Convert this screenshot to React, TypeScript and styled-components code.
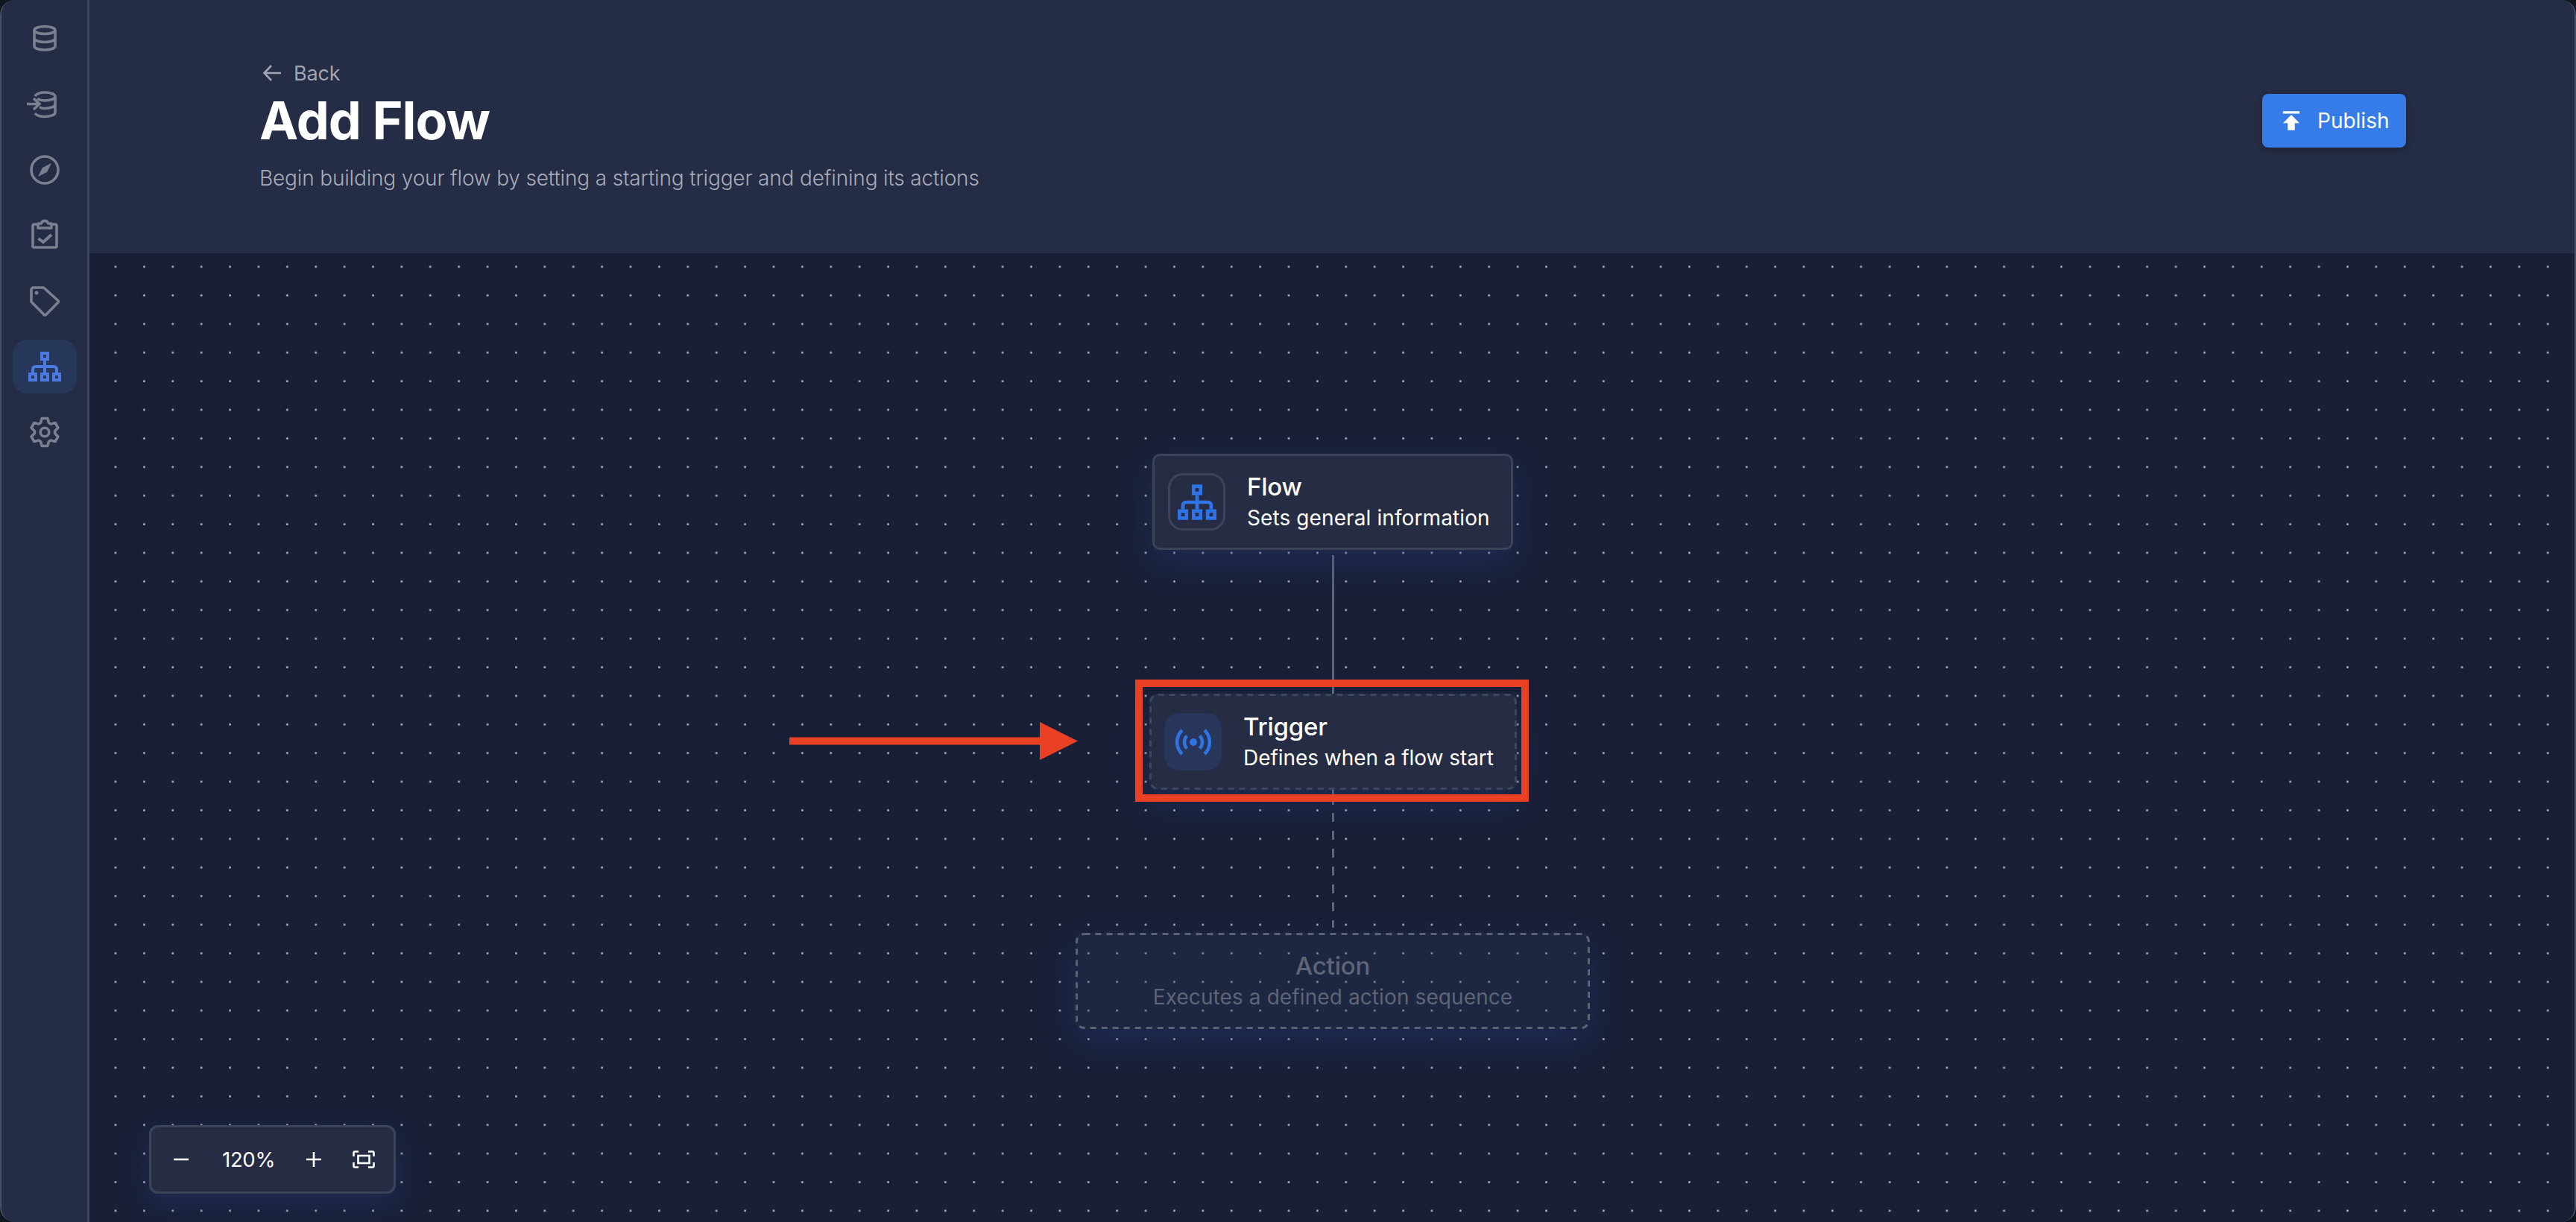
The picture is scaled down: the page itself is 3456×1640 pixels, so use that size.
import React from 'react';
import styled, { createGlobalStyle } from 'styled-components';
import { MdPublish } from 'react-icons/md';

const HierarchyIcon = ({ size = 44 }: { size?: number }) => (
  <svg width={size} height={size} viewBox="0 0 44 44" fill="none">
    <path
      fillRule="evenodd"
      fill="currentColor"
      d="M16 2h12v12H16zM20 6v4h4V6zM0 30h12v12H0zM4 34v4h4v-4zM16 30h12v12H16zM20 34v4h4v-4zM32 30h12v12H32zM36 34v4h4v-4z"
    />
    <path
      stroke="currentColor"
      strokeWidth="4"
      d="M22 14v16M6 30v-4.500a3.500 3.500 0 0 1 3.500-3.500h25a3.500 3.500 0 0 1 3.500 3.500V30"
    />
  </svg>
);

const BroadcastIcon = () => (
  <svg width="56" height="56" viewBox="0 0 56 56" fill="none" stroke="currentColor" strokeWidth="4.5">
    <path d="M13 12A22 22 0 0 0 13 44M43 12A22 22 0 0 1 43 44M19.500 19.500A12 12 0 0 0 19.500 36.500M36.500 19.500A12 12 0 0 1 36.500 36.500" />
    <circle cx="28" cy="28" r="5" fill="currentColor" stroke="none" />
  </svg>
);

const DatabaseIcon = () => (
  <svg width="44" height="44" viewBox="0 0 44 44" fill="none" stroke="currentColor" strokeWidth="3.6">
    <ellipse cx="22" cy="10.500" rx="14" ry="5" />
    <path d="M8 10.500V32c0 2.800 6.300 5 14 5s14-2.200 14-5V10.500M8 21.500c0 2.800 6.300 5 14 5s14-2.200 14-5" />
  </svg>
);

const ImportIcon = () => (
  <svg width="44" height="44" viewBox="0 -1 44 44" fill="none" stroke="currentColor" strokeWidth="3.6" overflow="visible">
    <path d="M9 10c2-3 7-5 13-5 8 0 14 2.400 14 5.500V32c0 3-6 5.500-14 5.500-6 0-11-1.700-13-4.500" />
    <path d="M12 13.500c2.500 1.500 6 2.500 10 2.500 8 0 14-2.400 14-5.500M15 25c2 1 4.500 1.500 7 1.500 8 0 14-2.400 14-5.500" />
    <path d="M-2 20.500h16M7 13l8 7.500L7 28" />
  </svg>
);

const CompassIcon = () => (
  <svg width="44" height="44" viewBox="0 0 44 44" fill="none">
    <circle cx="22" cy="22" r="18" stroke="currentColor" strokeWidth="3.6" />
    <path d="M31 13L25 25L13 31L19 19Z" fill="currentColor" />
  </svg>
);

const ClipboardIcon = () => (
  <svg width="44" height="44" viewBox="0 2 44 44" fill="none" stroke="currentColor" strokeWidth="3.6">
    <path d="M13 9H8a2 2 0 0 0-2 2v27a2 2 0 0 0 2 2h28a2 2 0 0 0 2-2V11a2 2 0 0 0-2-2h-5" />
    <path d="M13 8v6h18V8h-4.500a4.600 4.600 0 0 0-9 0z" strokeLinejoin="round" />
    <path d="M13.500 28l6.500 5 11-10" strokeWidth="4" />
  </svg>
);

const TagIcon = () => (
  <svg width="44" height="44" viewBox="0 0 44 44" fill="none" stroke="currentColor" strokeWidth="3.6" strokeLinejoin="round">
    <path d="M4 7a3 3 0 0 1 3-3h13.500L40 21.500a1.500 1.500 0 0 1 0 2.200L23.500 40.500a1.500 1.500 0 0 1-2.200 0L4 23z" />
    <circle cx="11" cy="11" r="2.500" fill="currentColor" stroke="none" />
  </svg>
);

// six teeth around the hub, same outline repeated every 60 degrees
const gearPath = () => {
  const points: string[] = [];
  for (let i = 0; i < 6; i++) {
    const a = ((-90 + 60 * i) * Math.PI) / 180;
    const at = (r: number, t: number) =>
      `${(22 + r * Math.cos(a) - t * Math.sin(a)).toFixed(2)} ${(22 + r * Math.sin(a) + t * Math.cos(a)).toFixed(2)}`;
    points.push(at(12.5, -5.5), at(18.5, -3.8), at(18.5, 3.8), at(12.5, 5.5));
  }
  return `M${points.join('L')}Z`;
};

const GearIcon = () => (
  <svg width="44" height="44" viewBox="0 0 44 44" fill="none" stroke="currentColor" strokeWidth="3.6" strokeLinejoin="round">
    <path d={gearPath()} />
    <circle cx="22" cy="22" r="5.800" />
  </svg>
);

const FitIcon = () => (
  <svg width="30" height="24" viewBox="0 0 30 24" fill="none" stroke="currentColor" strokeWidth="2.600">
    <path d="M1.500 8V3a1.500 1.500 0 0 1 1.500-1.500h5M21 1.500h6A1.500 1.500 0 0 1 28.500 3v5M28.500 16v5a1.500 1.500 0 0 1-1.500 1.500h-6M8 22.500H3A1.500 1.500 0 0 1 1.500 21v-5" />
    <rect x="7.500" y="7" width="15" height="10" />
  </svg>
);

const navItems = [
  { key: 'db', icon: <DatabaseIcon /> },
  { key: 'import', icon: <ImportIcon /> },
  { key: 'explore', icon: <CompassIcon /> },
  { key: 'tasks', icon: <ClipboardIcon /> },
  { key: 'tags', icon: <TagIcon /> },
  { key: 'flows', icon: <HierarchyIcon />, active: true },
  { key: 'settings', icon: <GearIcon /> },
];

const DashedOutline = ({ color }: { color: string }) => (
  <OutlineSvg>
    <OutlineRect rx="10" stroke={color} strokeWidth="3" strokeDasharray="8 7" />
  </OutlineSvg>
);

const App = () => {
  return (
    <Frame>
      <GlobalStyle />
      <Sidebar>
        {navItems.map((item) => (
          <NavButton key={item.key} $active={item.active}>
            {item.icon}
          </NavButton>
        ))}
      </Sidebar>
      <Main>
        <Header>
          <HeaderText>
            <BackLink>
              <svg width="26" height="24" viewBox="0 0 26 24" fill="none" stroke="currentColor" strokeWidth="2.600">
                <path d="M25 12H3M12 2L2.500 12L12 22" />
              </svg>
              Back
            </BackLink>
            <Title>Add Flow</Title>
            <Subtitle>Begin building your flow by setting a starting trigger and defining its actions</Subtitle>
          </HeaderText>
          <PublishButton>
            <MdPublish size={38} />
            Publish
          </PublishButton>
        </Header>
        <Canvas>
          <Connector $x={1667} $y={405} $h={167} />
          <Connector $x={1667} $y={582} $h={158} />
          <DashedConnector $x={1667} $y={751} $h={154} />

          <Node $x={1426} $y={269} $w={484}>
            <IconFrame $outlined>
              <HierarchyIcon size={52} />
            </IconFrame>
            <NodeText>
              <NodeTitle>Flow</NodeTitle>
              <NodeCaption>Sets general information</NodeCaption>
            </NodeText>
          </Node>

          <Node $x={1422} $y={591} $w={493} $variant="dashed" $pad={20}>
            <DashedOutline color="#3f465c" />
            <IconFrame>
              <BroadcastIcon />
            </IconFrame>
            <NodeText>
              <NodeTitle>Trigger</NodeTitle>
              <NodeCaption $tight>Defines when a flow start</NodeCaption>
            </NodeText>
          </Node>

          <Node $x={1323} $y={912} $w={690} $variant="ghost" $pad={0}>
            <DashedOutline color="#5c6274" />
            <NodeText $center>
              <NodeTitle>Action</NodeTitle>
              <NodeCaption>Executes a defined action sequence</NodeCaption>
            </NodeText>
          </Node>

          <Highlight />
          <Pointer width="388" height="52" viewBox="0 0 388 52">
            <path d="M0 20.500H336V0L387 25.500L336 51V30.500H0Z" fill="#ea4125" />
          </Pointer>

          <ZoomPanel>
            <ZoomButton>
              <svg width="20" height="20" viewBox="0 0 20 20" stroke="currentColor" strokeWidth="2.600">
                <path d="M0 10H20" />
              </svg>
            </ZoomButton>
            <ZoomValue>120%</ZoomValue>
            <ZoomButton>
              <svg width="20" height="20" viewBox="0 0 20 20" stroke="currentColor" strokeWidth="2.600">
                <path d="M0 10H20M10 0V20" />
              </svg>
            </ZoomButton>
            <ZoomButton $fit>
              <FitIcon />
            </ZoomButton>
          </ZoomPanel>
        </Canvas>
      </Main>
    </Frame>
  );
};

export default App;

const GlobalStyle = createGlobalStyle`
  html, body {
    margin: 0;
    padding: 0;
    background: #11141f;
  }

  body {
    font-family: 'Inter', 'Noto Sans', sans-serif;
  }
`;

const Frame = styled.div`
  display: flex;
  width: 3456px;
  height: 1640px;
  box-sizing: border-box;
  overflow: hidden;
  border-left: 2px solid #4a5167;
  border-right: 2px solid #4a5167;
  border-radius: 20px;
  background: #252c45;
`;

const Sidebar = styled.nav`
  display: flex;
  flex-direction: column;
  align-items: center;
  gap: 16px;
  flex: none;
  width: 118px;
  box-sizing: border-box;
  padding: 16px 0;
  border-right: 3px solid #3f465d;
  background: #252c45;
`;

const NavButton = styled.div<{ $active?: boolean }>`
  display: flex;
  align-items: center;
  justify-content: center;
  width: 86px;
  height: 72px;
  border-radius: 20px;
  color: ${(p) => (p.$active ? '#4a7ae0' : '#7b7f90')};
  background: ${(p) => (p.$active ? '#26375a' : 'transparent')};
`;

const Main = styled.main`
  display: flex;
  flex-direction: column;
  flex: 1;
  min-width: 0;
`;

const Header = styled.header`
  display: flex;
  justify-content: space-between;
  align-items: flex-start;
  flex: none;
  height: 340px;
  box-sizing: border-box;
  padding: 84px 226px 0 228px;
  background: #252c45;
`;

const HeaderText = styled.div`
  display: flex;
  flex-direction: column;
`;

const BackLink = styled.div`
  display: flex;
  align-items: center;
  gap: 16px;
  height: 28px;
  padding-left: 4px;
  font-size: 27px;
  letter-spacing: -0.2px;
  color: #a1a4b1;
`;

const Title = styled.h1`
  margin: 10px 0 0;
  font-size: 70px;
  line-height: 80px;
  font-weight: 700;
  letter-spacing: -1px;
  color: #ffffff;
`;

const Subtitle = styled.p`
  margin: 19px 0 0;
  font-size: 28px;
  line-height: 36px;
  letter-spacing: -0.16px;
  font-weight: 300;
  color: #a8abb8;
`;

const PublishButton = styled.button`
  display: flex;
  align-items: center;
  gap: 16px;
  width: 193px;
  height: 72px;
  margin-top: 42px;
  padding: 0 0 0 20px;
  box-sizing: border-box;
  border: none;
  border-radius: 8px;
  font-family: inherit;
  font-size: 28px;
  color: #ffffff;
  background: #367ce8;
  box-shadow: 0 3px 8px rgba(10, 14, 30, 0.35);
`;

const Canvas = styled.section`
  position: relative;
  flex: 1;
  overflow: hidden;
  background-color: #1a1f38;
  background-image: radial-gradient(circle at center, #a5a7b2 0, #a5a7b2 1.2px, transparent 1.7px);
  background-size: 38.4px 38.4px;
  background-position: 15.8px -1.2px;
`;

const Connector = styled.div<{ $x: number; $y: number; $h: number }>`
  position: absolute;
  left: ${(p) => p.$x}px;
  top: ${(p) => p.$y}px;
  width: 3px;
  height: ${(p) => p.$h}px;
  background: #606577;
`;

const DashedConnector = styled(Connector)`
  background: repeating-linear-gradient(to bottom, #606577 0, #606577 12px, transparent 12px, transparent 24px);
`;

const Node = styled.div<{
  $x: number;
  $y: number;
  $w: number;
  $variant?: 'dashed' | 'ghost';
  $pad?: number;
}>`
  position: absolute;
  left: ${(p) => p.$x}px;
  top: ${(p) => p.$y}px;
  display: flex;
  align-items: center;
  justify-content: ${(p) => (p.$variant === 'ghost' ? 'center' : 'flex-start')};
  gap: 29px;
  width: ${(p) => p.$w}px;
  height: 129px;
  box-sizing: border-box;
  padding-left: ${(p) => p.$pad ?? 18}px;
  border-radius: 10px;
  border: ${(p) => (p.$variant ? 'none' : '3px solid #3d445a')};
  background: ${(p) => (p.$variant === 'ghost' ? 'rgba(40, 55, 85, 0.32)' : '#252c43')};
  box-shadow: 0 18px 44px rgba(36, 66, 128, 0.34);
  color: ${(p) => (p.$variant === 'ghost' ? '#5f6476' : '#ffffff')};
`;

const OutlineSvg = styled.svg`
  position: absolute;
  inset: 0;
  width: 100%;
  height: 100%;
  fill: none;
`;

const OutlineRect = styled.rect`
  x: 1.5px;
  y: 1.5px;
  width: calc(100% - 3px);
  height: calc(100% - 3px);
`;

const IconFrame = styled.div<{ $outlined?: boolean }>`
  display: flex;
  align-items: center;
  justify-content: center;
  flex: none;
  width: 77px;
  height: 77px;
  box-sizing: border-box;
  border-radius: 20px;
  color: #2f74e6;
  border: ${(p) => (p.$outlined ? '3px solid #3d445a' : 'none')};
  background: ${(p) => (p.$outlined ? 'transparent' : '#27365a')};
`;

const NodeText = styled.div<{ $center?: boolean }>`
  display: flex;
  flex-direction: column;
  text-align: ${(p) => (p.$center ? 'center' : 'left')};
`;

const NodeTitle = styled.div`
  font-size: 33px;
  line-height: 42px;
  font-weight: 500;
  letter-spacing: -0.2px;
`;

const NodeCaption = styled.div<{ $tight?: boolean }>`
  font-size: 28px;
  line-height: 42px;
  letter-spacing: ${(p) => (p.$tight ? '-0.05px' : '0.1px')};
`;

const Highlight = styled.div`
  position: absolute;
  left: 1403px;
  top: 572px;
  width: 528px;
  height: 164px;
  box-sizing: border-box;
  border: 10px solid #ea4125;
`;

const Pointer = styled.svg`
  position: absolute;
  left: 939px;
  top: 629px;
`;

const ZoomPanel = styled.div`
  position: absolute;
  left: 80px;
  bottom: 38px;
  display: flex;
  align-items: center;
  gap: 45px;
  width: 331px;
  height: 92px;
  box-sizing: border-box;
  padding-left: 30px;
  border: 3px solid #3d445a;
  border-radius: 12px;
  background: #252c43;
  box-shadow: 0 14px 36px rgba(36, 66, 128, 0.36);
  color: #ffffff;
`;

const ZoomButton = styled.div<{ $fit?: boolean }>`
  display: flex;
  margin-left: ${(p) => (p.$fit ? '-3px' : '0')};
`;

const ZoomValue = styled.div`
  width: 68px;
  font-size: 27.5px;
  text-align: center;
  letter-spacing: -0.3px;
`;
